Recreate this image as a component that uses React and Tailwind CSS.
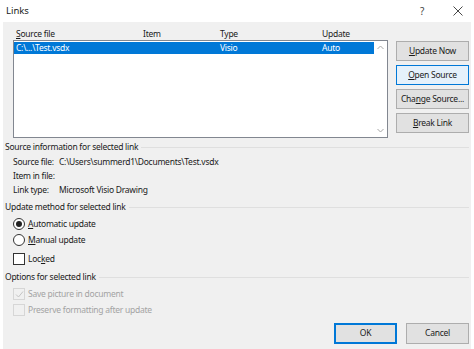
import React from 'react';

const font = { fontFamily: '"Noto Sans", "Open Sans", Arial, sans-serif' };

const Btn = ({ children, active }) => (
  <div
    className={`h-[20px] w-[73px] flex items-center justify-center whitespace-nowrap border ${
      active ? 'bg-[#e5f1fb] border-[#0078d7]' : 'bg-[#e1e1e1] border-[#adadad]'
    }`}
  >
    {children}
  </div>
);

const Section = ({ children }) => (
  <div className="h-[14px] flex items-center gap-[3px] pl-[2px] pr-[2px]">
    <span className="whitespace-nowrap leading-none">{children}</span>
    <div className="flex-1 h-px bg-[#dfdfdf]" />
  </div>
);

const Radio = ({ checked, children }) => (
  <div className="h-[16px] flex items-center pl-[10px]">
    <div className="w-[12px] h-[12px] rounded-full border border-[#333] bg-white flex items-center justify-center">
      {checked && <div className="w-[6px] h-[6px] rounded-full bg-[#222]" />}
    </div>
    <span className="ml-[3px] leading-none whitespace-nowrap">{children}</span>
  </div>
);

const Check = ({ checked, disabled, children }) => (
  <div className={`h-[16px] flex items-center pl-[10px] ${disabled ? 'text-[#a3a3a3]' : ''}`}>
    <div
      className={`w-[12px] h-[12px] border flex items-center justify-center ${
        disabled ? 'border-[#d6d6d6] bg-[#f0f0f0]' : 'border-[#333] bg-white'
      }`}
    >
      {checked && (
        <svg width="9" height="9" viewBox="0 0 9 9">
          <path d="M1 4.5 L3.5 7 L8 1.5" fill="none" stroke={disabled ? '#c4c4c4' : '#222'} strokeWidth="1" />
        </svg>
      )}
    </div>
    <span className="ml-[3px] leading-none whitespace-nowrap">{children}</span>
  </div>
);

const App = () => {
  return (
    <div
      className="w-[474px] h-[349px] bg-white flex flex-col text-[8.5px] tracking-[-0.25px] text-[#1a1a1a]"
      style={font}
    >
      <div className="h-[22px] flex items-center pl-[6px] pr-[11px] shrink-0">
        <span className="text-[9.5px] tracking-normal">Links</span>
        <span className="ml-auto mr-[29px] text-[10px] text-[#444]">?</span>
        <svg width="10" height="10" viewBox="0 0 10 10">
          <path d="M0.5 0.5 L9.5 9.5 M9.5 0.5 L0.5 9.5" stroke="#333" strokeWidth="0.9" />
        </svg>
      </div>
      <div className="flex-1 mx-[3px] bg-[#f0f0f0] flex flex-col">
        <div className="flex pt-[6px] pl-[10px]">
          <div className="w-[375px]">
            <div className="h-[12px] flex items-center pl-[3px] leading-none whitespace-nowrap">
              <span className="w-[127px]"><span className="underline">S</span>ource file</span>
              <span className="w-[77px]">Item</span>
              <span className="w-[102px]">Type</span>
              <span>Update</span>
            </div>
            <div className="h-[98px] border border-[#828790] bg-white flex">
              <div className="flex-1 pt-px">
                <div className="h-[12px] bg-[#0078d7] text-white flex items-center pl-[2px] leading-none whitespace-nowrap">
                  <span className="w-[127px]">C:\...\Test.vsdx</span>
                  <span className="w-[77px]"></span>
                  <span className="w-[102px]">Visio</span>
                  <span>Auto</span>
                </div>
              </div>
              <div className="w-[13px] flex flex-col items-center justify-between py-[4px]">
                <svg width="7" height="5" viewBox="0 0 7 5">
                  <path d="M0.5 4 L3.5 1 L6.5 4" fill="none" stroke="#a6a6a6" strokeWidth="1" />
                </svg>
                <svg width="7" height="5" viewBox="0 0 7 5">
                  <path d="M0.5 1 L3.5 4 L6.5 1" fill="none" stroke="#a6a6a6" strokeWidth="1" />
                </svg>
              </div>
            </div>
          </div>
          <div className="ml-[8px] pt-[13px] flex flex-col gap-[4px]">
            <Btn><span className="underline">U</span>pdate Now</Btn>
            <Btn active><span className="underline">O</span>pen Source</Btn>
            <Btn>Cha<span className="underline">n</span>ge Source...</Btn>
            <Btn><span className="underline">B</span>reak Link</Btn>
          </div>
        </div>
        <div className="mt-[2px]">
          <Section>Source information for selected link</Section>
          <div className="pl-[10px] pt-[1px] whitespace-nowrap">
            <div className="h-[14px] flex items-center leading-none">
              <span className="w-[46px]">Source file:</span>
              <span>C:\Users\summerd1\Documents\Test.vsdx</span>
            </div>
            <div className="h-[14px] flex items-center leading-none">
              <span className="w-[46px]">Item in file:</span>
            </div>
            <div className="h-[14px] flex items-center leading-none">
              <span className="w-[46px]">Link type:</span>
              <span>Microsoft Visio Drawing</span>
            </div>
          </div>
          <div className="mt-[3px]">
            <Section>Update method for selected link</Section>
          </div>
          <div className="pt-[2px]">
            <Radio checked><span className="underline">A</span>utomatic update</Radio>
            <Radio><span className="underline">M</span>anual update</Radio>
          </div>
          <div className="pt-[3px]">
            <Check>Loc<span className="underline">k</span>ed</Check>
          </div>
          <div className="pt-[3px]">
            <Section>Options for selected link</Section>
          </div>
          <div className="pt-[2px]">
            <Check checked disabled>Save picture in document</Check>
            <Check disabled>Preserve formatting after update</Check>
          </div>
        </div>
        <div className="flex justify-end gap-[9px] pr-[2px] mt-[5px]">
          <div className="h-[21px] w-[63px] bg-[#e1e1e1] border-2 border-[#0078d7] flex items-center justify-center">OK</div>
          <div className="h-[21px] w-[63px] bg-[#e1e1e1] border border-[#adadad] flex items-center justify-center">Cancel</div>
        </div>
      </div>
    </div>
  );
};

export default App;
